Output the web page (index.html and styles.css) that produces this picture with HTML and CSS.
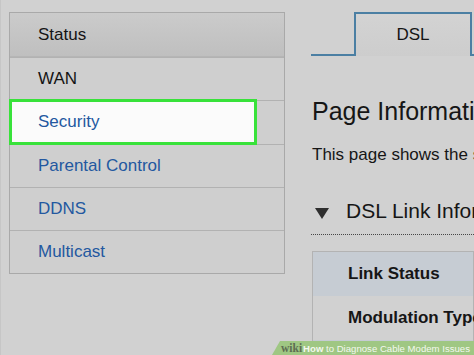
FILE: index.html
```html
<!DOCTYPE html>
<html lang="en">
<head>
    <meta charset="UTF-8">
    <meta name="viewport" content="width=device-width, initial-scale=1.0">
    <title>Modem - DSL Status</title>
    <link rel="stylesheet" href="styles.css">
</head>
<body>
    <div class="screen">
        <!-- Side menu -->
        <div class="sidebar">
            <div class="menu-item menu-head">Status</div>
            <div class="menu-item">WAN</div>
            <div class="menu-item selected">
                <div class="highlight">Security</div>
            </div>
            <div class="menu-item link">Parental Control</div>
            <div class="menu-item link">DDNS</div>
            <div class="menu-item link">Multicast</div>
        </div>

        <!-- Main content -->
        <div class="main">
            <div class="tabs">
                <div class="tab-line"></div>
                <div class="tab">DSL</div>
                <div class="tab-line rest"></div>
            </div>

            <h1 class="page-title">Page Information</h1>
            <p class="page-desc">This page shows the status of your DSL connection.</p>

            <div class="section-head">
                <span class="arrow"></span>
                <h2>DSL Link Information</h2>
            </div>

            <div class="info-table">
                <div class="info-row shaded">Link Status</div>
                <div class="info-row">Modulation Type</div>
                <div class="info-row shaded">Line Rate</div>
            </div>
        </div>
    </div>

    <div class="watermark"><span class="wiki">wiki</span><span class="how">How</span> to Diagnose Cable Modem Issues</div>
</body>
</html>
```

FILE: styles.css
```css
body {
    font-family: "Liberation Sans", Arial, sans-serif;
    margin: 0;
    padding: 0;
    width: 474px;
    height: 355px;
    overflow: hidden;
    background-color: #d1d1d1;
    position: relative;
}

.screen {
    display: flex;
    height: 355px;
    border-left: 1px solid #c6c6c6;
    box-sizing: border-box;
}

.sidebar {
    margin: 12px 0 0 8px;
    width: 276px;
    flex-shrink: 0;
    align-self: flex-start;
    border: 1px solid #a9a9a9;
    box-sizing: border-box;
}

.menu-item {
    height: 43px;
    box-sizing: border-box;
    border-top: 1px solid #b2b2b2;
    padding-left: 28px;
    display: flex;
    align-items: center;
    font-size: 17px;
    color: #141414;
    background-color: #cfcfcf;
}

.menu-item.menu-head {
    height: 44px;
    border-top: none;
    background: linear-gradient(#cbcbcb, #bfbfbf);
    border-bottom: 1px solid #b5b5b5;
}

.menu-item.link {
    color: #2358a0;
}

.menu-item.selected {
    padding-left: 0;
    height: 44px;
}

.highlight {
    width: 248px;
    height: 46px;
    margin-top: -1px;
    margin-left: -1px;
    box-sizing: border-box;
    border: 3px solid #38e23a;
    background-color: #fbfbfb;
    color: #2358a0;
    padding-left: 26px;
    display: flex;
    align-items: center;
}

.main {
    flex: 1;
    min-width: 0;
    margin-left: 26px;
    overflow: hidden;
    white-space: nowrap;
}

.tabs {
    display: flex;
    align-items: flex-end;
    margin-top: 12px;
    height: 44px;
}

.tab-line {
    width: 43px;
    flex-shrink: 0;
    border-bottom: 2px solid #4b7fa3;
}

.tab-line.rest {
    width: 20px;
}

.tab {
    width: 118px;
    height: 44px;
    flex-shrink: 0;
    box-sizing: border-box;
    border: 2px solid #4b7fa3;
    border-bottom: none;
    background: linear-gradient(#d3d3d3, #cdcdcd);
    font-size: 17px;
    color: #151515;
    display: flex;
    justify-content: center;
    align-items: center;
}

.page-title {
    font-size: 25px;
    font-weight: normal;
    line-height: 30px;
    margin: 40px 0 0 1px;
    color: #161616;
}

.page-desc {
    font-size: 17px;
    line-height: 20px;
    margin: 19px 0 0 1px;
    color: #161616;
}

.section-head {
    display: flex;
    align-items: center;
    margin-top: 33px;
    padding-bottom: 10px;
    border-bottom: 1px dotted #474747;
}

.arrow {
    width: 0;
    height: 0;
    margin: 4px 17px 0 4px;
    border-left: 7.5px solid transparent;
    border-right: 7.5px solid transparent;
    border-top: 11px solid #2e2e2e;
}

.section-head h2 {
    font-size: 21px;
    font-weight: normal;
    line-height: 26px;
    margin: 0;
    color: #161616;
}

.info-table {
    margin: 16px 0 0 1px;
    border: 1px solid #b3b3b3;
    box-shadow: inset 0 1px 0 #bababa;
}

.info-row {
    height: 44px;
    padding-left: 35px;
    display: flex;
    align-items: center;
    font-size: 17px;
    font-weight: bold;
    color: #161616;
}

.info-row.shaded {
    background-color: #c6ccd3;
}

.watermark {
    position: absolute;
    right: 0;
    bottom: 0;
    width: 202px;
    height: 14px;
    box-sizing: border-box;
    padding-left: 9px;
    background-color: #9fc783;
    clip-path: polygon(8px 0, 100% 0, 100% 100%, 0 100%);
    font-size: 9.6px;
    line-height: 14px;
    color: #f4f8ef;
    white-space: nowrap;
    overflow: hidden;
}

.watermark .wiki {
    font-family: "Liberation Serif", "Times New Roman", serif;
    font-weight: bold;
    font-size: 11.5px;
    line-height: 14px;
    color: #5d6d52;
}

.watermark .how {
    font-weight: bold;
    margin-left: 1px;
}
```
